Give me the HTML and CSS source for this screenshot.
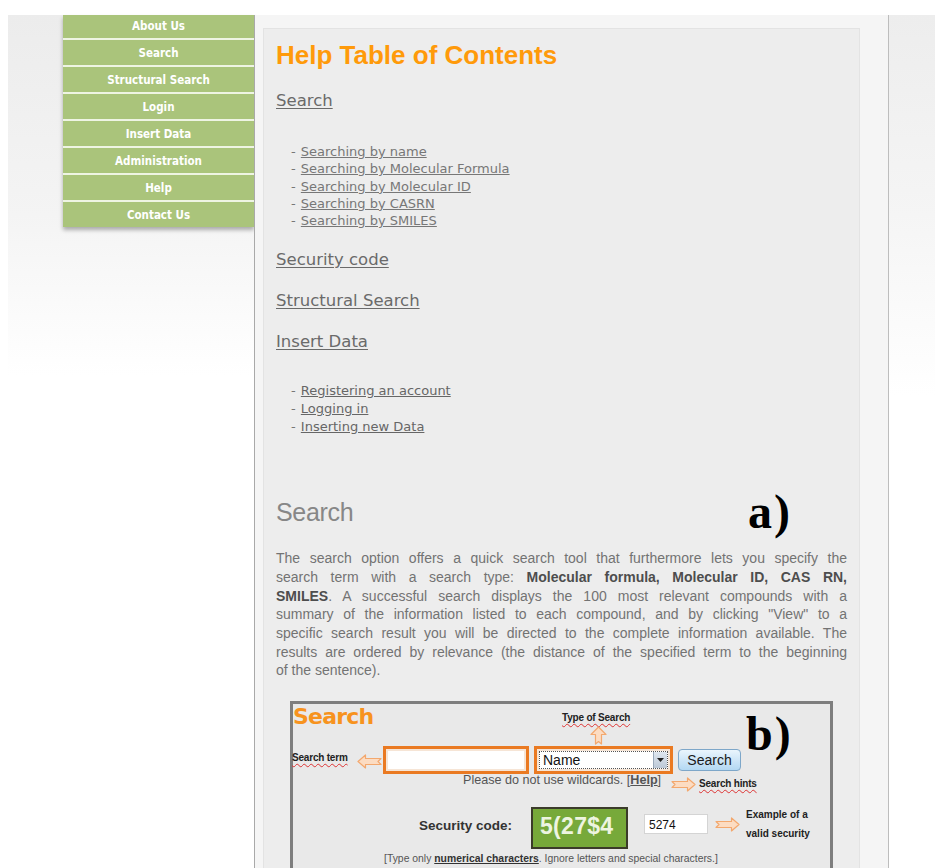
FILE: index.html
```html
<!DOCTYPE html>
<html lang="en">
<head>
<meta charset="utf-8">
<title>Help Table of Contents</title>
<link rel="stylesheet" href="styles.css">
</head>
<body>
<div class="page">
  <aside class="sidebar">
    <ul class="menu">
      <li><a href="#">About Us</a></li>
      <li><a href="#">Search</a></li>
      <li><a href="#">Structural Search</a></li>
      <li><a href="#">Login</a></li>
      <li><a href="#">Insert Data</a></li>
      <li><a href="#">Administration</a></li>
      <li><a href="#">Help</a></li>
      <li><a href="#">Contact Us</a></li>
    </ul>
  </aside>

  <main class="main">
    <div class="content">
      <h1 class="toc-title">Help Table of Contents</h1>

      <p class="toc-link"><a href="#search">Search</a></p>
      <ul class="toc-sub">
        <li>- <a href="#">Searching by name</a></li>
        <li>- <a href="#">Searching by Molecular Formula</a></li>
        <li>- <a href="#">Searching by Molecular ID</a></li>
        <li>- <a href="#">Searching by CASRN</a></li>
        <li>- <a href="#">Searching by SMILES</a></li>
      </ul>

      <p class="toc-link"><a href="#">Security code</a></p>
      <p class="toc-link"><a href="#">Structural Search</a></p>
      <p class="toc-link"><a href="#">Insert Data</a></p>
      <ul class="toc-sub toc-sub-strong">
        <li>- <a href="#">Registering an account</a></li>
        <li>- <a href="#">Logging in</a></li>
        <li>- <a href="#">Inserting new Data</a></li>
      </ul>

      <div class="section-head" id="search">
        <h2>Search</h2>
        <span class="fig-label">a)</span>
      </div>

      <p class="intro">
        <span class="ln">The search option offers a quick search tool that furthermore lets you specify the</span>
        <span class="ln">search term with a search type: <b>Molecular formula, Molecular ID, CAS RN,</b></span>
        <span class="ln"><b>SMILES</b>. A successful search displays the 100 most relevant compounds with a</span>
        <span class="ln">summary of the information listed to each compound, and by clicking "View" to a</span>
        <span class="ln">specific search result you will be directed to the complete information available. The</span>
        <span class="ln">results are ordered by relevance (the distance of the specified term to the beginning</span>
        <span class="ln last">of the sentence).</span>
      </p>

      <figure class="shot">
        <h3 class="shot-title">Search</h3>

        <div class="shot-form">
          <span class="frame frame-term"><span class="field"></span></span>
          <span class="frame frame-type">
            <span class="select"><span class="select-value">Name</span><span class="select-btn"><svg width="7" height="4" viewBox="0 0 7 4"><path d="M0 0h7L3.5 4z" fill="#222"/></svg></span></span>
          </span>
          <span class="btn">Search</span>
        </div>
        <p class="shot-hint">Please do not use wildcards. [<b>Help</b>]</p>

        <div class="shot-security">
          <span class="sec-label">Security code:</span>
          <span class="captcha">5(27$4</span>
          <span class="sec-input">5274</span>
        </div>
        <p class="shot-note">[Type only <b>numerical characters</b>. Ignore letters and special characters.]</p>

        <!-- callouts laid over the form -->
        <span class="note note-type">Type of Search</span>
        <svg class="arrow arrow-up" width="17" height="19" viewBox="0 0 17 19"><path d="M8.5 1L16 8.5H11.5V18L8.5 15.5L5.5 18V8.5H1Z" fill="#fcdcc2" stroke="#f3a86e" stroke-width="1.2" stroke-linejoin="round"/></svg>
        <span class="fig-label fig-label-b">b)</span>
        <span class="note note-term">Search term</span>
        <svg class="arrow arrow-left" width="25" height="15" viewBox="0 0 25 15"><path d="M1 7.5L8.5 1V4.5H24L21 7.5L24 10.5H8.5V14Z" fill="#fcdcc2" stroke="#f3a86e" stroke-width="1.2" stroke-linejoin="round"/></svg>
        <svg class="arrow arrow-hints" width="25" height="15" viewBox="0 0 25 15"><path d="M24 7.5L16.5 1V4.5H1L4 7.5L1 10.5H16.5V14Z" fill="#fcdcc2" stroke="#f3a86e" stroke-width="1.2" stroke-linejoin="round"/></svg>
        <span class="note note-hints">Search hints</span>
        <svg class="arrow arrow-sec" width="25" height="15" viewBox="0 0 25 15"><path d="M24 7.5L16.5 1V4.5H1L4 7.5L1 10.5H16.5V14Z" fill="#fcdcc2" stroke="#f3a86e" stroke-width="1.2" stroke-linejoin="round"/></svg>
        <span class="note-plain">Example of a<br>valid security</span>
      </figure>
    </div>
  </main>

  <div class="rail"></div>
</div>
</body>
</html>
```

FILE: styles.css
```css
* { box-sizing: border-box; }

html, body {
  margin: 0;
  padding: 0;
  background: #fff;
  height: 100%;
  overflow: hidden;
}

body {
  font-family: "Liberation Sans", Arial, sans-serif;
  color: #666;
}

/* three-column shell below the white header strip */
.page {
  margin: 15px 0 0 8px;
  display: grid;
  grid-template-columns: 246px 635px 1fr;
  min-height: 853px;
}

.sidebar {
  background: linear-gradient(#ececec 0, #f4f4f4 200px, #fff 360px);
}

.rail {
  background: linear-gradient(#ededed 0, #f5f5f5 200px, #fff 380px);
}

/* green navigation */
.menu {
  list-style: none;
  margin: 0 0 0 55px;
  padding: 0;
  width: 191px;
  box-shadow: 0 3px 4px rgba(0, 0, 0, 0.3);
}

.menu li {
  border-bottom: 2px solid #eef4e3;
}

.menu li:last-child {
  border-bottom: 0;
}

.menu a {
  display: block;
  height: 25px;
  line-height: 27px;
  overflow: hidden;
  background: #aac47b;
  color: #fff;
  text-align: center;
  text-decoration: none;
  font-family: "DejaVu Sans", Verdana, sans-serif;
  font-stretch: condensed;
  font-weight: bold;
  font-size: 11.5px;
}

.menu li:first-child a {
  height: 23px;
  line-height: 23px;
}

/* central column */
.main {
  background: #f5f5f5;
  border-left: 1px solid #a9a9a9;
  border-right: 1px solid #bdbdbd;
  padding: 13px 28px 0 8px;
}

.content {
  background: #ededed;
  border: 1px solid #e3e3e3;
  border-bottom: 0;
  padding: 11px 12px 40px 12px;
  min-height: 900px;
}

.toc-title {
  margin: 0;
  font-family: "Liberation Sans", Arial, sans-serif;
  font-weight: bold;
  font-size: 26px;
  line-height: 30px;
  color: #ff9a0a;
}

.toc-link {
  margin: 21px 0 0;
  font-family: "DejaVu Sans", Verdana, sans-serif;
  font-size: 16.5px;
  line-height: 20px;
}

.toc-link a {
  color: #6a6a6a;
  text-decoration: underline;
  text-underline-offset: 2px;
}

.toc-sub {
  list-style: none;
  margin: 32px 0 21px 15px;
  padding: 0;
  font-family: "DejaVu Sans", Verdana, sans-serif;
  font-size: 13px;
  line-height: 17.25px;
  color: #777;
}

.toc-sub a {
  margin-left: 1px;
  color: #777;
  text-decoration: underline;
}

.toc-sub + .toc-link {
  margin-top: 21px;
}

.toc-sub-strong {
  margin-top: 30px;
  margin-bottom: 0;
  line-height: 18px;
}

.toc-sub-strong a {
  color: #666;
}

.section-head {
  margin-top: 60px;
  display: flex;
  align-items: center;
  justify-content: space-between;
  padding-right: 55px;
  height: 32px;
}

.section-head h2 {
  margin: 0;
  font-weight: normal;
  font-size: 25px;
  letter-spacing: -0.3px;
  color: #878787;
}

.fig-label {
  font-family: "Liberation Serif", "Times New Roman", serif;
  font-weight: bold;
  font-size: 48px;
  letter-spacing: 2px;
  line-height: 40px;
  color: #000;
}

.intro {
  margin: 21px 0 0;
  font-size: 14px;
  line-height: 18.67px;
  color: #737373;
}

.intro .ln {
  display: block;
  text-align: justify;
  text-align-last: justify;
  white-space: nowrap;
}

.intro .ln.last {
  text-align-last: left;
}

.intro b {
  color: #4d4d4d;
}

/* screenshot of the search form */
.shot {
  position: relative;
  margin: 21px 0 0 14px;
  width: 543px;
  height: 200px;
  border: 3px solid #7e7e7e;
  background: #e9e9e9;
  font-family: "Liberation Sans", Arial, sans-serif;
}

.shot-title {
  margin: 0;
  font-family: "DejaVu Sans", Verdana, sans-serif;
  font-weight: bold;
  font-size: 22px;
  letter-spacing: -0.8px;
  line-height: 26px;
  color: #f7931e;
}

.shot-form {
  display: flex;
  align-items: center;
  gap: 5px;
  margin-top: 16px;
  padding-left: 90px;
}

.frame {
  display: flex;
  align-items: center;
  height: 28px;
  padding: 2px;
  border: 3px solid #ea7a22;
  background: #f6e5d6;
}

.frame-term {
  width: 146px;
}

.field {
  display: block;
  width: 100%;
  height: 100%;
  background: #fff;
}

.frame-type {
  width: 139px;
}

.select {
  display: flex;
  width: 100%;
  height: 100%;
  background: #fff;
  border: 1px dotted #555;
}

.select-value {
  flex: 1;
  font-size: 14px;
  line-height: 16px;
  padding-left: 3px;
  color: #111;
}

.select-btn {
  display: flex;
  align-items: center;
  justify-content: center;
  width: 14px;
  background: linear-gradient(#dfe6ee, #bcc8d6);
  border-left: 1px solid #9aa9ba;
}

.btn {
  width: 63px;
  height: 22px;
  line-height: 20px;
  text-align: center;
  font-size: 14px;
  color: #1a1a1a;
  border: 1px solid #7ea7c9;
  border-radius: 4px;
  background: linear-gradient(#eaf5fd, #b3d8f3);
}

.shot-hint {
  margin: -1px 0 0 170px;
  font-size: 12.6px;
  line-height: 14px;
  color: #555;
}

.shot-hint b {
  text-decoration: underline;
  color: #555;
}

.shot-security {
  display: flex;
  align-items: center;
  margin-top: 20px;
  padding-left: 126px;
  height: 42px;
}

.sec-label {
  margin-bottom: 5px;
  font-weight: bold;
  font-size: 13.5px;
  color: #333;
  width: 112px;
}

.captcha {
  width: 97px;
  height: 42px;
  line-height: 35px;
  padding-left: 7px;
  border: 2px solid #3b3b2a;
  background: #77a93a;
  color: #edf4e0;
  font-weight: bold;
  font-size: 23px;
  letter-spacing: 0.3px;
}

.sec-input {
  align-self: flex-start;
  margin: 7px 0 0 16px;
  width: 64px;
  height: 20px;
  line-height: 20px;
  padding-left: 4px;
  background: #fff;
  border: 1px solid #d4d4d4;
  font-size: 12px;
  color: #111;
}

.shot-note {
  margin: 3px 0 0 91px;
  font-size: 10.4px;
  line-height: 14px;
  color: #555;
}

.shot-note b {
  text-decoration: underline;
  color: #333;
}

/* callouts */
.note,
.note-plain,
.arrow,
.fig-label-b {
  position: absolute;
}

.note {
  font-size: 10px;
  font-weight: bold;
  color: #222;
  text-decoration: underline wavy #d33;
  text-decoration-thickness: 1px;
  text-underline-offset: 2px;
  letter-spacing: -0.2px;
}

.note-type { left: 269px; top: 8px; }
.arrow-up { left: 297px; top: 22px; }
.fig-label-b { left: 453px; top: 10px; }
.note-term { left: -1px; top: 48px; }
.arrow-left { left: 64px; top: 50px; }
.arrow-hints { left: 378px; top: 73px; }
.note-hints { left: 406px; top: 74px; }
.arrow-sec { left: 422px; top: 113px; }

.note-plain {
  left: 453px;
  top: 101px;
  font-size: 10px;
  font-weight: bold;
  line-height: 19px;
  color: #222;
}
```
